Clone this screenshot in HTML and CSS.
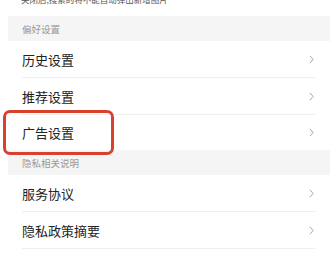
FILE: index.html
```html
<!DOCTYPE html>
<html lang="zh">
<head>
<meta charset="utf-8">
<link rel="stylesheet" href="styles.css">
</head>
<body>
<div class="page">
  <div class="note"><span>关闭后,搜索的将不能自动弹出新增图片</span></div>
  <div class="group-title">偏好设置</div>
  <div class="row"><span class="label">历史设置</span><svg class="chev" viewBox="0 0 5 9"><path d="M0.8 0.8 L4.2 4.5 L0.8 8.2"/></svg></div>
  <div class="row"><span class="label">推荐设置</span><svg class="chev" viewBox="0 0 5 9"><path d="M0.8 0.8 L4.2 4.5 L0.8 8.2"/></svg></div>
  <div class="row last highlighted"><span class="label">广告设置</span><svg class="chev" viewBox="0 0 5 9"><path d="M0.8 0.8 L4.2 4.5 L0.8 8.2"/></svg><div class="mark"></div></div>
  <div class="group-title">隐私相关说明</div>
  <div class="row"><span class="label">服务协议</span><svg class="chev" viewBox="0 0 5 9"><path d="M0.8 0.8 L4.2 4.5 L0.8 8.2"/></svg></div>
  <div class="row"><span class="label">隐私政策摘要</span><svg class="chev" viewBox="0 0 5 9"><path d="M0.8 0.8 L4.2 4.5 L0.8 8.2"/></svg></div>
</div>
</body>
</html>
```
FILE: styles.css
```css
html, body {
  margin: 0;
  padding: 0;
  background: #ffffff;
}
body {
  font-family: "Noto Sans CJK SC", "Noto Sans", sans-serif;
  width: 330px;
  height: 257px;
  overflow: hidden;
}
.page {
  padding-left: 8px;
}
.note {
  height: 16px;
  display: flex;
  align-items: flex-end;
  padding-left: 13px;
}
.note span {
  font-size: 8.5px;
  line-height: 10px;
  color: #555;
  margin-bottom: 12px;
  white-space: nowrap;
}
.group-title {
  height: 25px;
  background: #f5f5f5;
  padding-left: 14px;
  font-size: 9.5px;
  color: #999;
  display: flex;
  align-items: center;
}
.row {
  position: relative;
  height: 37px;
  margin-left: 14px;
  margin-right: 15px;
  border-bottom: 1px solid #efefef;
  box-sizing: border-box;
  display: flex;
  align-items: center;
  justify-content: space-between;
}
.row.last {
  border-bottom: none;
  height: 35px;
}
.label {
  font-size: 13px;
  color: #222;
}
.chev {
  width: 5px;
  height: 9px;
  margin-right: 1px;
}
.chev path {
  fill: none;
  stroke: #9a9a9a;
  stroke-width: 0.9;
}
.mark {
  position: absolute;
  left: -19px;
  top: -5px;
  width: 111px;
  height: 45px;
  box-sizing: border-box;
  border: 3px solid #d9412e;
  border-radius: 7px;
}
```
